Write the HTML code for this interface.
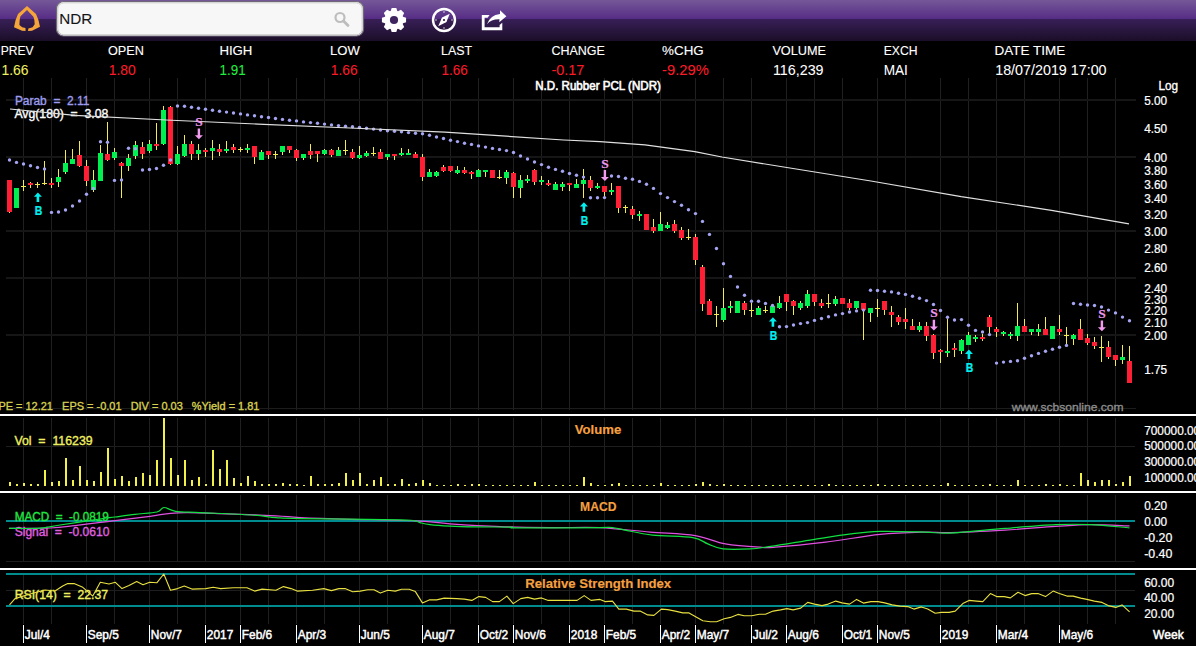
<!DOCTYPE html>
<html><head><meta charset="utf-8">
<style>
html,body{margin:0;padding:0;background:#000;width:1196px;height:646px;overflow:hidden;position:relative}
svg text{font-family:"Liberation Sans",sans-serif}
</style></head><body>
<svg width="1196" height="41" style="position:absolute;left:0;top:0">
 <defs>
  <linearGradient id="hg1" x1="0" y1="0" x2="0" y2="1"><stop offset="0" stop-color="#755898"/><stop offset="1" stop-color="#562c85"/></linearGradient>
  <linearGradient id="hg2" x1="0" y1="0" x2="0" y2="1"><stop offset="0" stop-color="#381f57"/><stop offset="1" stop-color="#1b0e28"/></linearGradient>
 </defs>
 <rect x="0" y="0" width="1196" height="19" fill="url(#hg1)"/>
 <rect x="0" y="19" width="1196" height="22" fill="url(#hg2)"/>
 <path d="M28 31 L32 30.8 L40 26.8 Q39 20 36 14 L27 6 L18 14 Q15 20 14 27.2 L22 30.8 L25.5 31 L25.5 28 L22.2 27.2 L19.4 25 Q19.5 19 20.5 16.3 L27 10 L33.4 16.7 Q34.8 20 34.7 24.2 L32.6 27.2 L28.4 28.4 Z" fill="#f5a63a"/>
 <rect x="56.5" y="1.5" width="307" height="34.5" rx="7" fill="#f7f7f7" stroke="#6e6878" stroke-width="1.2"/>
 <rect x="57.8" y="2.8" width="304.4" height="32" rx="6" fill="none" stroke="#c8c8c8" stroke-width="1"/>
 <circle cx="340" cy="17.5" r="4.5" fill="none" stroke="#bdbdbd" stroke-width="2.2"/>
 <line x1="343.5" y1="21" x2="348" y2="25.5" stroke="#bdbdbd" stroke-width="2.8" stroke-linecap="round"/>
 <g transform="translate(394,20)" fill="#fff"><path d="M-3.32 -9.01 L-2.30 -12.08 L2.30 -12.08 L3.32 -9.01 L4.02 -8.72 L6.91 -10.17 L10.17 -6.91 L8.72 -4.02 L9.01 -3.32 L12.08 -2.30 L12.08 2.30 L9.01 3.32 L8.72 4.02 L10.17 6.91 L6.91 10.17 L4.02 8.72 L3.32 9.01 L2.30 12.08 L-2.30 12.08 L-3.32 9.01 L-4.02 8.72 L-6.91 10.17 L-10.17 6.91 L-8.72 4.02 L-9.01 3.32 L-12.08 2.30 L-12.08 -2.30 L-9.01 -3.32 L-8.72 -4.02 L-10.17 -6.91 L-6.91 -10.17 L-4.02 -8.72 Z"/><circle r="4.1" fill="#3e2560"/></g>
 <g transform="translate(444,20)">
  <circle r="11" fill="none" stroke="#fff" stroke-width="2.4"/>
  <path d="M5.8 -6.2 L2.4 2 L-5.8 6.2 L-2 -2.4 Z" fill="#fff"/>
  <circle r="2.6" fill="#fff"/><circle r="1.1" fill="#2a1840"/>
  <circle cx="0" cy="-8" r="0.7" fill="#fff"/><circle cx="0" cy="8" r="0.7" fill="#fff"/>
  <circle cx="-8" cy="0" r="0.7" fill="#fff"/><circle cx="8" cy="0" r="0.7" fill="#fff"/>
 </g>
 <path d="M481.8 15 L489.6 15 L487.6 17.8 L484.6 17.8 L484.6 27.3 L499.6 27.3 L499.6 25 L502.3 22.7 L502.3 30.2 L481.8 30.2 Z" fill="#fff"/>
 <path d="M487 24.2 Q490 15.2 500 14 L500 10.2 L506.4 16.2 L499.3 22.2 L499.5 19.2 Q491 19 487 24.2 Z" fill="#fff"/>
</svg>
<svg width="1196" height="646" style="position:absolute;left:0;top:0">
<rect x="23.0" y="78" width="1" height="332" fill="#202020"/>
<rect x="51.0" y="78" width="1" height="332" fill="#202020"/>
<rect x="86.0" y="78" width="1" height="332" fill="#202020"/>
<rect x="114.0" y="78" width="1" height="332" fill="#202020"/>
<rect x="149.0" y="78" width="1" height="332" fill="#202020"/>
<rect x="177.0" y="78" width="1" height="332" fill="#202020"/>
<rect x="205.0" y="78" width="1" height="332" fill="#202020"/>
<rect x="240.0" y="78" width="1" height="332" fill="#202020"/>
<rect x="268.0" y="78" width="1" height="332" fill="#202020"/>
<rect x="296.0" y="78" width="1" height="332" fill="#202020"/>
<rect x="324.0" y="78" width="1" height="332" fill="#202020"/>
<rect x="359.0" y="78" width="1" height="332" fill="#202020"/>
<rect x="387.0" y="78" width="1" height="332" fill="#202020"/>
<rect x="422.0" y="78" width="1" height="332" fill="#202020"/>
<rect x="450.0" y="78" width="1" height="332" fill="#202020"/>
<rect x="478.0" y="78" width="1" height="332" fill="#202020"/>
<rect x="513.0" y="78" width="1" height="332" fill="#202020"/>
<rect x="541.0" y="78" width="1" height="332" fill="#202020"/>
<rect x="569.0" y="78" width="1" height="332" fill="#202020"/>
<rect x="604.0" y="78" width="1" height="332" fill="#202020"/>
<rect x="632.0" y="78" width="1" height="332" fill="#202020"/>
<rect x="660.0" y="78" width="1" height="332" fill="#202020"/>
<rect x="695.0" y="78" width="1" height="332" fill="#202020"/>
<rect x="723.0" y="78" width="1" height="332" fill="#202020"/>
<rect x="751.0" y="78" width="1" height="332" fill="#202020"/>
<rect x="786.0" y="78" width="1" height="332" fill="#202020"/>
<rect x="814.0" y="78" width="1" height="332" fill="#202020"/>
<rect x="842.0" y="78" width="1" height="332" fill="#202020"/>
<rect x="877.0" y="78" width="1" height="332" fill="#202020"/>
<rect x="905.0" y="78" width="1" height="332" fill="#202020"/>
<rect x="940.0" y="78" width="1" height="332" fill="#202020"/>
<rect x="968.0" y="78" width="1" height="332" fill="#202020"/>
<rect x="996.0" y="78" width="1" height="332" fill="#202020"/>
<rect x="1024.0" y="78" width="1" height="332" fill="#202020"/>
<rect x="1059.0" y="78" width="1" height="332" fill="#202020"/>
<rect x="1087.0" y="78" width="1" height="332" fill="#202020"/>
<rect x="1115.0" y="78" width="1" height="332" fill="#202020"/>
<rect x="6" y="408" width="1130" height="1" fill="#1c1c1c"/>
<rect x="6" y="99" width="1130" height="2" fill="#161616"/>
<rect x="6" y="156" width="1130" height="2" fill="#161616"/>
<rect x="6" y="230" width="1130" height="2" fill="#161616"/>
<rect x="6" y="277" width="1130" height="2" fill="#161616"/>
<rect x="6" y="334" width="1130" height="2" fill="#161616"/>
<rect x="23.0" y="418" width="1" height="65" fill="#202020"/>
<rect x="51.0" y="418" width="1" height="65" fill="#202020"/>
<rect x="86.0" y="418" width="1" height="65" fill="#202020"/>
<rect x="114.0" y="418" width="1" height="65" fill="#202020"/>
<rect x="149.0" y="418" width="1" height="65" fill="#202020"/>
<rect x="177.0" y="418" width="1" height="65" fill="#202020"/>
<rect x="205.0" y="418" width="1" height="65" fill="#202020"/>
<rect x="240.0" y="418" width="1" height="65" fill="#202020"/>
<rect x="268.0" y="418" width="1" height="65" fill="#202020"/>
<rect x="296.0" y="418" width="1" height="65" fill="#202020"/>
<rect x="324.0" y="418" width="1" height="65" fill="#202020"/>
<rect x="359.0" y="418" width="1" height="65" fill="#202020"/>
<rect x="387.0" y="418" width="1" height="65" fill="#202020"/>
<rect x="422.0" y="418" width="1" height="65" fill="#202020"/>
<rect x="450.0" y="418" width="1" height="65" fill="#202020"/>
<rect x="478.0" y="418" width="1" height="65" fill="#202020"/>
<rect x="513.0" y="418" width="1" height="65" fill="#202020"/>
<rect x="541.0" y="418" width="1" height="65" fill="#202020"/>
<rect x="569.0" y="418" width="1" height="65" fill="#202020"/>
<rect x="604.0" y="418" width="1" height="65" fill="#202020"/>
<rect x="632.0" y="418" width="1" height="65" fill="#202020"/>
<rect x="660.0" y="418" width="1" height="65" fill="#202020"/>
<rect x="695.0" y="418" width="1" height="65" fill="#202020"/>
<rect x="723.0" y="418" width="1" height="65" fill="#202020"/>
<rect x="751.0" y="418" width="1" height="65" fill="#202020"/>
<rect x="786.0" y="418" width="1" height="65" fill="#202020"/>
<rect x="814.0" y="418" width="1" height="65" fill="#202020"/>
<rect x="842.0" y="418" width="1" height="65" fill="#202020"/>
<rect x="877.0" y="418" width="1" height="65" fill="#202020"/>
<rect x="905.0" y="418" width="1" height="65" fill="#202020"/>
<rect x="940.0" y="418" width="1" height="65" fill="#202020"/>
<rect x="968.0" y="418" width="1" height="65" fill="#202020"/>
<rect x="996.0" y="418" width="1" height="65" fill="#202020"/>
<rect x="1024.0" y="418" width="1" height="65" fill="#202020"/>
<rect x="1059.0" y="418" width="1" height="65" fill="#202020"/>
<rect x="1087.0" y="418" width="1" height="65" fill="#202020"/>
<rect x="1115.0" y="418" width="1" height="65" fill="#202020"/>
<rect x="6" y="446" width="1129" height="1" fill="#1e1e1e"/>
<rect x="23.0" y="495" width="1" height="67" fill="#202020"/>
<rect x="51.0" y="495" width="1" height="67" fill="#202020"/>
<rect x="86.0" y="495" width="1" height="67" fill="#202020"/>
<rect x="114.0" y="495" width="1" height="67" fill="#202020"/>
<rect x="149.0" y="495" width="1" height="67" fill="#202020"/>
<rect x="177.0" y="495" width="1" height="67" fill="#202020"/>
<rect x="205.0" y="495" width="1" height="67" fill="#202020"/>
<rect x="240.0" y="495" width="1" height="67" fill="#202020"/>
<rect x="268.0" y="495" width="1" height="67" fill="#202020"/>
<rect x="296.0" y="495" width="1" height="67" fill="#202020"/>
<rect x="324.0" y="495" width="1" height="67" fill="#202020"/>
<rect x="359.0" y="495" width="1" height="67" fill="#202020"/>
<rect x="387.0" y="495" width="1" height="67" fill="#202020"/>
<rect x="422.0" y="495" width="1" height="67" fill="#202020"/>
<rect x="450.0" y="495" width="1" height="67" fill="#202020"/>
<rect x="478.0" y="495" width="1" height="67" fill="#202020"/>
<rect x="513.0" y="495" width="1" height="67" fill="#202020"/>
<rect x="541.0" y="495" width="1" height="67" fill="#202020"/>
<rect x="569.0" y="495" width="1" height="67" fill="#202020"/>
<rect x="604.0" y="495" width="1" height="67" fill="#202020"/>
<rect x="632.0" y="495" width="1" height="67" fill="#202020"/>
<rect x="660.0" y="495" width="1" height="67" fill="#202020"/>
<rect x="695.0" y="495" width="1" height="67" fill="#202020"/>
<rect x="723.0" y="495" width="1" height="67" fill="#202020"/>
<rect x="751.0" y="495" width="1" height="67" fill="#202020"/>
<rect x="786.0" y="495" width="1" height="67" fill="#202020"/>
<rect x="814.0" y="495" width="1" height="67" fill="#202020"/>
<rect x="842.0" y="495" width="1" height="67" fill="#202020"/>
<rect x="877.0" y="495" width="1" height="67" fill="#202020"/>
<rect x="905.0" y="495" width="1" height="67" fill="#202020"/>
<rect x="940.0" y="495" width="1" height="67" fill="#202020"/>
<rect x="968.0" y="495" width="1" height="67" fill="#202020"/>
<rect x="996.0" y="495" width="1" height="67" fill="#202020"/>
<rect x="1024.0" y="495" width="1" height="67" fill="#202020"/>
<rect x="1059.0" y="495" width="1" height="67" fill="#202020"/>
<rect x="1087.0" y="495" width="1" height="67" fill="#202020"/>
<rect x="1115.0" y="495" width="1" height="67" fill="#202020"/>
<rect x="6" y="561" width="1129" height="1" fill="#1e1e1e"/>
<rect x="23.0" y="573" width="1" height="51" fill="#202020"/>
<rect x="51.0" y="573" width="1" height="51" fill="#202020"/>
<rect x="86.0" y="573" width="1" height="51" fill="#202020"/>
<rect x="114.0" y="573" width="1" height="51" fill="#202020"/>
<rect x="149.0" y="573" width="1" height="51" fill="#202020"/>
<rect x="177.0" y="573" width="1" height="51" fill="#202020"/>
<rect x="205.0" y="573" width="1" height="51" fill="#202020"/>
<rect x="240.0" y="573" width="1" height="51" fill="#202020"/>
<rect x="268.0" y="573" width="1" height="51" fill="#202020"/>
<rect x="296.0" y="573" width="1" height="51" fill="#202020"/>
<rect x="324.0" y="573" width="1" height="51" fill="#202020"/>
<rect x="359.0" y="573" width="1" height="51" fill="#202020"/>
<rect x="387.0" y="573" width="1" height="51" fill="#202020"/>
<rect x="422.0" y="573" width="1" height="51" fill="#202020"/>
<rect x="450.0" y="573" width="1" height="51" fill="#202020"/>
<rect x="478.0" y="573" width="1" height="51" fill="#202020"/>
<rect x="513.0" y="573" width="1" height="51" fill="#202020"/>
<rect x="541.0" y="573" width="1" height="51" fill="#202020"/>
<rect x="569.0" y="573" width="1" height="51" fill="#202020"/>
<rect x="604.0" y="573" width="1" height="51" fill="#202020"/>
<rect x="632.0" y="573" width="1" height="51" fill="#202020"/>
<rect x="660.0" y="573" width="1" height="51" fill="#202020"/>
<rect x="695.0" y="573" width="1" height="51" fill="#202020"/>
<rect x="723.0" y="573" width="1" height="51" fill="#202020"/>
<rect x="751.0" y="573" width="1" height="51" fill="#202020"/>
<rect x="786.0" y="573" width="1" height="51" fill="#202020"/>
<rect x="814.0" y="573" width="1" height="51" fill="#202020"/>
<rect x="842.0" y="573" width="1" height="51" fill="#202020"/>
<rect x="877.0" y="573" width="1" height="51" fill="#202020"/>
<rect x="905.0" y="573" width="1" height="51" fill="#202020"/>
<rect x="940.0" y="573" width="1" height="51" fill="#202020"/>
<rect x="968.0" y="573" width="1" height="51" fill="#202020"/>
<rect x="996.0" y="573" width="1" height="51" fill="#202020"/>
<rect x="1024.0" y="573" width="1" height="51" fill="#202020"/>
<rect x="1059.0" y="573" width="1" height="51" fill="#202020"/>
<rect x="1087.0" y="573" width="1" height="51" fill="#202020"/>
<rect x="1115.0" y="573" width="1" height="51" fill="#202020"/>
<rect x="6" y="590" width="1129" height="1" fill="#1e1e1e"/>
<rect x="0" y="414" width="1196" height="2" fill="#fff"/>
<rect x="0" y="491" width="1196" height="2" fill="#fff"/>
<rect x="0" y="568" width="1196" height="2" fill="#fff"/>
<rect x="6" y="520" width="1129" height="2" fill="#008c8e"/>
<rect x="6" y="573" width="1129" height="2" fill="#008c8e"/>
<rect x="6" y="605" width="1129" height="2" fill="#008c8e"/>
<text x="0.7" y="55" font-size="13" fill="#fff" stroke="#fff" stroke-width="0.12" font-weight="normal" textLength="32.9" lengthAdjust="spacingAndGlyphs">PREV</text>
<text x="108.0" y="55" font-size="13" fill="#fff" stroke="#fff" stroke-width="0.12" font-weight="normal" textLength="35.9" lengthAdjust="spacingAndGlyphs">OPEN</text>
<text x="219.4" y="55" font-size="13" fill="#fff" stroke="#fff" stroke-width="0.12" font-weight="normal" textLength="33.0" lengthAdjust="spacingAndGlyphs">HIGH</text>
<text x="330.0" y="55" font-size="13" fill="#fff" stroke="#fff" stroke-width="0.12" font-weight="normal" textLength="29.8" lengthAdjust="spacingAndGlyphs">LOW</text>
<text x="441.1" y="55" font-size="13" fill="#fff" stroke="#fff" stroke-width="0.12" font-weight="normal" textLength="31.1" lengthAdjust="spacingAndGlyphs">LAST</text>
<text x="551.4" y="55" font-size="13" fill="#fff" stroke="#fff" stroke-width="0.12" font-weight="normal" textLength="53.5" lengthAdjust="spacingAndGlyphs">CHANGE</text>
<text x="662.1" y="55" font-size="13" fill="#fff" stroke="#fff" stroke-width="0.12" font-weight="normal" textLength="41.6" lengthAdjust="spacingAndGlyphs">%CHG</text>
<text x="772.4" y="55" font-size="13" fill="#fff" stroke="#fff" stroke-width="0.12" font-weight="normal" textLength="53.7" lengthAdjust="spacingAndGlyphs">VOLUME</text>
<text x="883.7" y="55" font-size="13" fill="#fff" stroke="#fff" stroke-width="0.12" font-weight="normal" textLength="33.8" lengthAdjust="spacingAndGlyphs">EXCH</text>
<text x="994.6" y="55" font-size="13" fill="#fff" stroke="#fff" stroke-width="0.12" font-weight="normal" textLength="70.7" lengthAdjust="spacingAndGlyphs">DATE TIME</text>
<text x="1.4" y="74.8" font-size="13.9" fill="#f0f060" stroke="#f0f060" stroke-width="0.05" font-weight="normal" textLength="27.1" lengthAdjust="spacingAndGlyphs">1.66</text>
<text x="108.8" y="74.8" font-size="13.9" fill="#ff1a2a" stroke="#ff1a2a" stroke-width="0.05" font-weight="normal" textLength="27.0" lengthAdjust="spacingAndGlyphs">1.80</text>
<text x="219.6" y="74.8" font-size="13.9" fill="#20f040" stroke="#20f040" stroke-width="0.05" font-weight="normal" textLength="26.1" lengthAdjust="spacingAndGlyphs">1.91</text>
<text x="330.8" y="74.8" font-size="13.9" fill="#ff1a2a" stroke="#ff1a2a" stroke-width="0.05" font-weight="normal" textLength="26.8" lengthAdjust="spacingAndGlyphs">1.66</text>
<text x="441.6" y="74.8" font-size="13.9" fill="#ff1a2a" stroke="#ff1a2a" stroke-width="0.05" font-weight="normal" textLength="26.3" lengthAdjust="spacingAndGlyphs">1.66</text>
<text x="551.4" y="74.8" font-size="13.9" fill="#ff1a2a" stroke="#ff1a2a" stroke-width="0.05" font-weight="normal" textLength="33.0" lengthAdjust="spacingAndGlyphs">-0.17</text>
<text x="662.1" y="74.8" font-size="13.9" fill="#ff1a2a" stroke="#ff1a2a" stroke-width="0.05" font-weight="normal" textLength="46.7" lengthAdjust="spacingAndGlyphs">-9.29%</text>
<text x="772.9" y="74.8" font-size="13.9" fill="#fff" stroke="#fff" stroke-width="0.05" font-weight="normal" textLength="50.7" lengthAdjust="spacingAndGlyphs">116,239</text>
<text x="883.7" y="74.8" font-size="13.9" fill="#fff" stroke="#fff" stroke-width="0.05" font-weight="normal" textLength="24.2" lengthAdjust="spacingAndGlyphs">MAI</text>
<text x="995.2" y="74.8" font-size="13.9" fill="#fff" stroke="#fff" stroke-width="0.05" font-weight="normal" textLength="111.4" lengthAdjust="spacingAndGlyphs">18/07/2019 17:00</text>
<text x="59.2" y="23.8" font-size="15.5" fill="#151515" stroke="#151515" stroke-width="0.1" font-weight="normal" textLength="33.0" lengthAdjust="spacingAndGlyphs">NDR</text>
<text x="535.2" y="89.8" font-size="12" fill="#fff" stroke="#fff" stroke-width="0.6" font-weight="normal" textLength="125.7" lengthAdjust="spacingAndGlyphs">N.D. Rubber PCL (NDR)</text>
<text x="14.9" y="104.5" font-size="12" fill="#9c9cf0" stroke="#9c9cf0" stroke-width="0.35" font-weight="normal" textLength="74.5" lengthAdjust="spacingAndGlyphs">Parab&#160;&#160;=&#160;&#160;2.11</text>
<text x="14.4" y="118" font-size="12" fill="#fff" stroke="#fff" stroke-width="0.35" font-weight="normal" textLength="94.0" lengthAdjust="spacingAndGlyphs">Avg(180)&#160;&#160;=&#160;&#160;3.08</text>
<text x="-1.6" y="409.6" font-size="11" fill="#d8d050" stroke="#d8d050" stroke-width="0.35" font-weight="normal" textLength="261.0" lengthAdjust="spacingAndGlyphs">PE = 12.21&#160;&#160;&#160;EPS = -0.01&#160;&#160;&#160;DIV = 0.03&#160;&#160;&#160;%Yield = 1.81</text>
<text x="1011.7" y="410.8" font-size="11.5" fill="#8c8c8c" stroke="#8c8c8c" stroke-width="0.35" font-weight="normal" textLength="111.9" lengthAdjust="spacingAndGlyphs">www.scbsonline.com</text>
<text x="574.8" y="434" font-size="12.5" fill="#f5a040" stroke="#f5a040" stroke-width="0.15" font-weight="bold" textLength="46.5" lengthAdjust="spacingAndGlyphs">Volume</text>
<text x="580.1" y="510.9" font-size="12.5" fill="#f5a040" stroke="#f5a040" stroke-width="0.15" font-weight="bold" textLength="36.3" lengthAdjust="spacingAndGlyphs">MACD</text>
<text x="525.2" y="587.8" font-size="12.5" fill="#f5a040" stroke="#f5a040" stroke-width="0.15" font-weight="bold" textLength="146.0" lengthAdjust="spacingAndGlyphs">Relative Strength Index</text>
<text x="14.4" y="444.8" font-size="12" fill="#f0f060" stroke="#f0f060" stroke-width="0.35" font-weight="normal" textLength="78.2" lengthAdjust="spacingAndGlyphs">Vol&#160;&#160;=&#160;&#160;116239</text>
<text x="14.7" y="521.3" font-size="12" fill="#20e840" stroke="#20e840" stroke-width="0.35" font-weight="normal" textLength="94.2" lengthAdjust="spacingAndGlyphs">MACD&#160;&#160;=&#160;&#160;-0.0819</text>
<text x="14.7" y="535.5" font-size="12" fill="#e060e0" stroke="#e060e0" stroke-width="0.35" font-weight="normal" textLength="94.7" lengthAdjust="spacingAndGlyphs">Signal&#160;&#160;=&#160;&#160;-0.0610</text>
<text x="14.7" y="598.8" font-size="12" fill="#f0f060" stroke="#f0f060" stroke-width="0.35" font-weight="normal" textLength="93.4" lengthAdjust="spacingAndGlyphs">RSI(14)&#160;&#160;=&#160;&#160;22.37</text>
<text x="1144.2" y="105.0" font-size="12.5" fill="#fff" stroke="#fff" stroke-width="0.22" textLength="23.0" lengthAdjust="spacingAndGlyphs">5.00</text>
<text x="1144.2" y="132.6" font-size="12.5" fill="#fff" stroke="#fff" stroke-width="0.22" textLength="23.0" lengthAdjust="spacingAndGlyphs">4.50</text>
<text x="1144.2" y="162.3" font-size="12.5" fill="#fff" stroke="#fff" stroke-width="0.22" textLength="23.0" lengthAdjust="spacingAndGlyphs">4.00</text>
<text x="1144.2" y="175.3" font-size="12.5" fill="#fff" stroke="#fff" stroke-width="0.22" textLength="23.0" lengthAdjust="spacingAndGlyphs">3.80</text>
<text x="1144.2" y="188.9" font-size="12.5" fill="#fff" stroke="#fff" stroke-width="0.22" textLength="23.0" lengthAdjust="spacingAndGlyphs">3.60</text>
<text x="1144.2" y="203.0" font-size="12.5" fill="#fff" stroke="#fff" stroke-width="0.22" textLength="23.0" lengthAdjust="spacingAndGlyphs">3.40</text>
<text x="1144.2" y="219.4" font-size="12.5" fill="#fff" stroke="#fff" stroke-width="0.22" textLength="23.0" lengthAdjust="spacingAndGlyphs">3.20</text>
<text x="1144.2" y="236.1" font-size="12.5" fill="#fff" stroke="#fff" stroke-width="0.22" textLength="23.0" lengthAdjust="spacingAndGlyphs">3.00</text>
<text x="1144.2" y="253.0" font-size="12.5" fill="#fff" stroke="#fff" stroke-width="0.22" textLength="23.0" lengthAdjust="spacingAndGlyphs">2.80</text>
<text x="1144.2" y="271.6" font-size="12.5" fill="#fff" stroke="#fff" stroke-width="0.22" textLength="23.0" lengthAdjust="spacingAndGlyphs">2.60</text>
<text x="1144.2" y="292.7" font-size="12.5" fill="#fff" stroke="#fff" stroke-width="0.22" textLength="23.0" lengthAdjust="spacingAndGlyphs">2.40</text>
<text x="1144.2" y="303.8" font-size="12.5" fill="#fff" stroke="#fff" stroke-width="0.22" textLength="23.0" lengthAdjust="spacingAndGlyphs">2.30</text>
<text x="1144.2" y="315.2" font-size="12.5" fill="#fff" stroke="#fff" stroke-width="0.22" textLength="23.0" lengthAdjust="spacingAndGlyphs">2.20</text>
<text x="1144.2" y="326.6" font-size="12.5" fill="#fff" stroke="#fff" stroke-width="0.22" textLength="23.0" lengthAdjust="spacingAndGlyphs">2.10</text>
<text x="1144.2" y="339.8" font-size="12.5" fill="#fff" stroke="#fff" stroke-width="0.22" textLength="23.0" lengthAdjust="spacingAndGlyphs">2.00</text>
<text x="1144.2" y="374.1" font-size="12.5" fill="#fff" stroke="#fff" stroke-width="0.22" textLength="23.0" lengthAdjust="spacingAndGlyphs">1.75</text>
<text x="1158.4" y="90" font-size="12.5" fill="#fff" stroke="#fff" stroke-width="0.35" font-weight="normal" textLength="19.6" lengthAdjust="spacingAndGlyphs">Log</text>
<text x="1144.2" y="435.1" font-size="12.5" fill="#fff" stroke="#fff" stroke-width="0.22" textLength="56.0" lengthAdjust="spacingAndGlyphs">700000.00</text>
<text x="1144.2" y="450.4" font-size="12.5" fill="#fff" stroke="#fff" stroke-width="0.22" textLength="56.0" lengthAdjust="spacingAndGlyphs">500000.00</text>
<text x="1144.2" y="465.9" font-size="12.5" fill="#fff" stroke="#fff" stroke-width="0.22" textLength="56.0" lengthAdjust="spacingAndGlyphs">300000.00</text>
<text x="1144.2" y="482.1" font-size="12.5" fill="#fff" stroke="#fff" stroke-width="0.22" textLength="56.0" lengthAdjust="spacingAndGlyphs">100000.00</text>
<text x="1144.2" y="510.3" font-size="12.5" fill="#fff" stroke="#fff" stroke-width="0.22" textLength="23.0" lengthAdjust="spacingAndGlyphs">0.20</text>
<text x="1144.2" y="525.6" font-size="12.5" fill="#fff" stroke="#fff" stroke-width="0.22" textLength="23.0" lengthAdjust="spacingAndGlyphs">0.00</text>
<text x="1144.2" y="541.6" font-size="12.5" fill="#fff" stroke="#fff" stroke-width="0.22" textLength="28.2" lengthAdjust="spacingAndGlyphs">-0.20</text>
<text x="1144.2" y="557.8" font-size="12.5" fill="#fff" stroke="#fff" stroke-width="0.22" textLength="28.2" lengthAdjust="spacingAndGlyphs">-0.40</text>
<text x="1144.2" y="586.6" font-size="12.5" fill="#fff" stroke="#fff" stroke-width="0.22" textLength="30.0" lengthAdjust="spacingAndGlyphs">60.00</text>
<text x="1144.2" y="602.0" font-size="12.5" fill="#fff" stroke="#fff" stroke-width="0.22" textLength="30.0" lengthAdjust="spacingAndGlyphs">40.00</text>
<text x="1144.2" y="617.8" font-size="12.5" fill="#fff" stroke="#fff" stroke-width="0.22" textLength="30.0" lengthAdjust="spacingAndGlyphs">20.00</text>
<rect x="23.0" y="625" width="1" height="18" fill="#fff"/>
<text x="24.8" y="639.3" font-size="11.9" fill="#fff" stroke="#fff" stroke-width="0.45">Jul/4</text>
<rect x="86.0" y="625" width="1" height="18" fill="#fff"/>
<text x="87.8" y="639.3" font-size="11.9" fill="#fff" stroke="#fff" stroke-width="0.45">Sep/5</text>
<rect x="149.0" y="625" width="1" height="18" fill="#fff"/>
<text x="150.8" y="639.3" font-size="11.9" fill="#fff" stroke="#fff" stroke-width="0.45">Nov/7</text>
<rect x="205.0" y="625" width="1" height="18" fill="#fff"/>
<text x="206.8" y="639.3" font-size="11.9" fill="#fff" stroke="#fff" stroke-width="0.45">2017</text>
<rect x="240.0" y="625" width="1" height="18" fill="#fff"/>
<text x="241.8" y="639.3" font-size="11.9" fill="#fff" stroke="#fff" stroke-width="0.45">Feb/6</text>
<rect x="296.0" y="625" width="1" height="18" fill="#fff"/>
<text x="297.8" y="639.3" font-size="11.9" fill="#fff" stroke="#fff" stroke-width="0.45">Apr/3</text>
<rect x="359.0" y="625" width="1" height="18" fill="#fff"/>
<text x="360.8" y="639.3" font-size="11.9" fill="#fff" stroke="#fff" stroke-width="0.45">Jun/5</text>
<rect x="422.0" y="625" width="1" height="18" fill="#fff"/>
<text x="423.8" y="639.3" font-size="11.9" fill="#fff" stroke="#fff" stroke-width="0.45">Aug/7</text>
<rect x="478.0" y="625" width="1" height="18" fill="#fff"/>
<text x="479.8" y="639.3" font-size="11.9" fill="#fff" stroke="#fff" stroke-width="0.45">Oct/2</text>
<rect x="513.0" y="625" width="1" height="18" fill="#fff"/>
<text x="514.8" y="639.3" font-size="11.9" fill="#fff" stroke="#fff" stroke-width="0.45">Nov/6</text>
<rect x="569.0" y="625" width="1" height="18" fill="#fff"/>
<text x="570.8" y="639.3" font-size="11.9" fill="#fff" stroke="#fff" stroke-width="0.45">2018</text>
<rect x="604.0" y="625" width="1" height="18" fill="#fff"/>
<text x="605.8" y="639.3" font-size="11.9" fill="#fff" stroke="#fff" stroke-width="0.45">Feb/5</text>
<rect x="660.0" y="625" width="1" height="18" fill="#fff"/>
<text x="661.8" y="639.3" font-size="11.9" fill="#fff" stroke="#fff" stroke-width="0.45">Apr/2</text>
<rect x="695.0" y="625" width="1" height="18" fill="#fff"/>
<text x="696.8" y="639.3" font-size="11.9" fill="#fff" stroke="#fff" stroke-width="0.45">May/7</text>
<rect x="751.0" y="625" width="1" height="18" fill="#fff"/>
<text x="752.8" y="639.3" font-size="11.9" fill="#fff" stroke="#fff" stroke-width="0.45">Jul/2</text>
<rect x="786.0" y="625" width="1" height="18" fill="#fff"/>
<text x="787.8" y="639.3" font-size="11.9" fill="#fff" stroke="#fff" stroke-width="0.45">Aug/6</text>
<rect x="842.0" y="625" width="1" height="18" fill="#fff"/>
<text x="843.8" y="639.3" font-size="11.9" fill="#fff" stroke="#fff" stroke-width="0.45">Oct/1</text>
<rect x="877.0" y="625" width="1" height="18" fill="#fff"/>
<text x="878.8" y="639.3" font-size="11.9" fill="#fff" stroke="#fff" stroke-width="0.45">Nov/5</text>
<rect x="940.0" y="625" width="1" height="18" fill="#fff"/>
<text x="941.8" y="639.3" font-size="11.9" fill="#fff" stroke="#fff" stroke-width="0.45">2019</text>
<rect x="996.0" y="625" width="1" height="18" fill="#fff"/>
<text x="997.8" y="639.3" font-size="11.9" fill="#fff" stroke="#fff" stroke-width="0.45">Mar/4</text>
<rect x="1059.0" y="625" width="1" height="18" fill="#fff"/>
<text x="1060.8" y="639.3" font-size="11.9" fill="#fff" stroke="#fff" stroke-width="0.45">May/6</text>
<text x="1153.1" y="639.3" font-size="12" fill="#fff" stroke="#fff" stroke-width="0.45" font-weight="normal" textLength="30.8" lengthAdjust="spacingAndGlyphs">Week</text>
<rect x="9" y="482" width="2" height="4" fill="#f0f048"/>
<rect x="16" y="484" width="2" height="2" fill="#f0f048"/>
<rect x="23" y="483" width="2" height="3" fill="#f0f048"/>
<rect x="30" y="484" width="2" height="2" fill="#f0f048"/>
<rect x="37" y="484" width="2" height="2" fill="#f0f048"/>
<rect x="44" y="470" width="2" height="16" fill="#f0f048"/>
<rect x="51" y="482" width="2" height="4" fill="#f0f048"/>
<rect x="58" y="481" width="2" height="5" fill="#f0f048"/>
<rect x="65" y="458" width="2" height="28" fill="#f0f048"/>
<rect x="72" y="480" width="2" height="6" fill="#f0f048"/>
<rect x="79" y="466" width="2" height="20" fill="#f0f048"/>
<rect x="86" y="480" width="2" height="6" fill="#f0f048"/>
<rect x="93" y="481" width="2" height="5" fill="#f0f048"/>
<rect x="100" y="472" width="2" height="14" fill="#f0f048"/>
<rect x="107" y="448" width="2" height="38" fill="#f0f048"/>
<rect x="114" y="479" width="2" height="7" fill="#f0f048"/>
<rect x="121" y="476" width="2" height="10" fill="#f0f048"/>
<rect x="128" y="481" width="2" height="5" fill="#f0f048"/>
<rect x="135" y="477" width="2" height="9" fill="#f0f048"/>
<rect x="142" y="473" width="2" height="13" fill="#f0f048"/>
<rect x="149" y="475" width="2" height="11" fill="#f0f048"/>
<rect x="156" y="460" width="2" height="26" fill="#f0f048"/>
<rect x="163" y="418" width="2" height="68" fill="#f0f048"/>
<rect x="170" y="458" width="2" height="28" fill="#f0f048"/>
<rect x="177" y="475" width="2" height="11" fill="#f0f048"/>
<rect x="184" y="460" width="2" height="26" fill="#f0f048"/>
<rect x="191" y="480" width="2" height="6" fill="#f0f048"/>
<rect x="198" y="477" width="2" height="9" fill="#f0f048"/>
<rect x="205" y="484" width="2" height="2" fill="#f0f048"/>
<rect x="212" y="450" width="2" height="36" fill="#f0f048"/>
<rect x="219" y="469" width="2" height="17" fill="#f0f048"/>
<rect x="226" y="460" width="2" height="26" fill="#f0f048"/>
<rect x="233" y="478" width="2" height="8" fill="#f0f048"/>
<rect x="240" y="483" width="2" height="3" fill="#f0f048"/>
<rect x="247" y="476" width="2" height="10" fill="#f0f048"/>
<rect x="254" y="481" width="2" height="5" fill="#f0f048"/>
<rect x="261" y="484" width="2" height="2" fill="#f0f048"/>
<rect x="268" y="484" width="2" height="2" fill="#f0f048"/>
<rect x="275" y="484" width="2" height="2" fill="#f0f048"/>
<rect x="282" y="483" width="2" height="3" fill="#f0f048"/>
<rect x="289" y="484" width="2" height="2" fill="#f0f048"/>
<rect x="296" y="484" width="2" height="2" fill="#f0f048"/>
<rect x="303" y="485" width="2" height="1" fill="#f0f048"/>
<rect x="310" y="476" width="2" height="10" fill="#f0f048"/>
<rect x="317" y="484" width="2" height="2" fill="#f0f048"/>
<rect x="324" y="484" width="2" height="2" fill="#f0f048"/>
<rect x="331" y="484" width="2" height="2" fill="#f0f048"/>
<rect x="338" y="483" width="2" height="3" fill="#f0f048"/>
<rect x="345" y="473" width="2" height="13" fill="#f0f048"/>
<rect x="352" y="480" width="2" height="6" fill="#f0f048"/>
<rect x="359" y="473" width="2" height="13" fill="#f0f048"/>
<rect x="366" y="484" width="2" height="2" fill="#f0f048"/>
<rect x="373" y="480" width="2" height="6" fill="#f0f048"/>
<rect x="380" y="477" width="2" height="9" fill="#f0f048"/>
<rect x="387" y="484" width="2" height="2" fill="#f0f048"/>
<rect x="394" y="484" width="2" height="2" fill="#f0f048"/>
<rect x="401" y="479" width="2" height="7" fill="#f0f048"/>
<rect x="408" y="484" width="2" height="2" fill="#f0f048"/>
<rect x="415" y="483" width="2" height="3" fill="#f0f048"/>
<rect x="422" y="480" width="2" height="6" fill="#f0f048"/>
<rect x="429" y="483" width="2" height="3" fill="#f0f048"/>
<rect x="436" y="485" width="2" height="1" fill="#f0f048"/>
<rect x="443" y="485" width="2" height="1" fill="#f0f048"/>
<rect x="450" y="485" width="2" height="1" fill="#f0f048"/>
<rect x="457" y="484" width="2" height="2" fill="#f0f048"/>
<rect x="464" y="485" width="2" height="1" fill="#f0f048"/>
<rect x="471" y="484" width="2" height="2" fill="#f0f048"/>
<rect x="478" y="484" width="2" height="2" fill="#f0f048"/>
<rect x="485" y="485" width="2" height="1" fill="#f0f048"/>
<rect x="492" y="485" width="2" height="1" fill="#f0f048"/>
<rect x="499" y="485" width="2" height="1" fill="#f0f048"/>
<rect x="506" y="485" width="2" height="1" fill="#f0f048"/>
<rect x="513" y="485" width="2" height="1" fill="#f0f048"/>
<rect x="520" y="485" width="2" height="1" fill="#f0f048"/>
<rect x="527" y="485" width="2" height="1" fill="#f0f048"/>
<rect x="534" y="482" width="2" height="4" fill="#f0f048"/>
<rect x="541" y="485" width="2" height="1" fill="#f0f048"/>
<rect x="548" y="485" width="2" height="1" fill="#f0f048"/>
<rect x="555" y="485" width="2" height="1" fill="#f0f048"/>
<rect x="562" y="485" width="2" height="1" fill="#f0f048"/>
<rect x="569" y="485" width="2" height="1" fill="#f0f048"/>
<rect x="576" y="485" width="2" height="1" fill="#f0f048"/>
<rect x="583" y="477" width="2" height="9" fill="#f0f048"/>
<rect x="590" y="483" width="2" height="3" fill="#f0f048"/>
<rect x="597" y="485" width="2" height="1" fill="#f0f048"/>
<rect x="604" y="485" width="2" height="1" fill="#f0f048"/>
<rect x="611" y="484" width="2" height="2" fill="#f0f048"/>
<rect x="618" y="483" width="2" height="3" fill="#f0f048"/>
<rect x="625" y="485" width="2" height="1" fill="#f0f048"/>
<rect x="632" y="485" width="2" height="1" fill="#f0f048"/>
<rect x="639" y="485" width="2" height="1" fill="#f0f048"/>
<rect x="646" y="485" width="2" height="1" fill="#f0f048"/>
<rect x="653" y="485" width="2" height="1" fill="#f0f048"/>
<rect x="660" y="483" width="2" height="3" fill="#f0f048"/>
<rect x="667" y="485" width="2" height="1" fill="#f0f048"/>
<rect x="674" y="485" width="2" height="1" fill="#f0f048"/>
<rect x="681" y="485" width="2" height="1" fill="#f0f048"/>
<rect x="688" y="485" width="2" height="1" fill="#f0f048"/>
<rect x="695" y="484" width="2" height="2" fill="#f0f048"/>
<rect x="702" y="482" width="2" height="4" fill="#f0f048"/>
<rect x="709" y="484" width="2" height="2" fill="#f0f048"/>
<rect x="716" y="485" width="2" height="1" fill="#f0f048"/>
<rect x="723" y="484" width="2" height="2" fill="#f0f048"/>
<rect x="730" y="485" width="2" height="1" fill="#f0f048"/>
<rect x="737" y="485" width="2" height="1" fill="#f0f048"/>
<rect x="744" y="485" width="2" height="1" fill="#f0f048"/>
<rect x="751" y="485" width="2" height="1" fill="#f0f048"/>
<rect x="758" y="485" width="2" height="1" fill="#f0f048"/>
<rect x="765" y="485" width="2" height="1" fill="#f0f048"/>
<rect x="772" y="485" width="2" height="1" fill="#f0f048"/>
<rect x="779" y="485" width="2" height="1" fill="#f0f048"/>
<rect x="786" y="485" width="2" height="1" fill="#f0f048"/>
<rect x="793" y="485" width="2" height="1" fill="#f0f048"/>
<rect x="800" y="485" width="2" height="1" fill="#f0f048"/>
<rect x="807" y="485" width="2" height="1" fill="#f0f048"/>
<rect x="814" y="485" width="2" height="1" fill="#f0f048"/>
<rect x="821" y="485" width="2" height="1" fill="#f0f048"/>
<rect x="828" y="484" width="2" height="2" fill="#f0f048"/>
<rect x="835" y="485" width="2" height="1" fill="#f0f048"/>
<rect x="842" y="485" width="2" height="1" fill="#f0f048"/>
<rect x="849" y="485" width="2" height="1" fill="#f0f048"/>
<rect x="856" y="485" width="2" height="1" fill="#f0f048"/>
<rect x="863" y="485" width="2" height="1" fill="#f0f048"/>
<rect x="870" y="485" width="2" height="1" fill="#f0f048"/>
<rect x="877" y="484" width="2" height="2" fill="#f0f048"/>
<rect x="884" y="485" width="2" height="1" fill="#f0f048"/>
<rect x="891" y="485" width="2" height="1" fill="#f0f048"/>
<rect x="898" y="485" width="2" height="1" fill="#f0f048"/>
<rect x="905" y="485" width="2" height="1" fill="#f0f048"/>
<rect x="912" y="485" width="2" height="1" fill="#f0f048"/>
<rect x="919" y="485" width="2" height="1" fill="#f0f048"/>
<rect x="926" y="485" width="2" height="1" fill="#f0f048"/>
<rect x="933" y="485" width="2" height="1" fill="#f0f048"/>
<rect x="940" y="485" width="2" height="1" fill="#f0f048"/>
<rect x="947" y="483" width="2" height="3" fill="#f0f048"/>
<rect x="954" y="485" width="2" height="1" fill="#f0f048"/>
<rect x="961" y="485" width="2" height="1" fill="#f0f048"/>
<rect x="968" y="485" width="2" height="1" fill="#f0f048"/>
<rect x="975" y="485" width="2" height="1" fill="#f0f048"/>
<rect x="982" y="485" width="2" height="1" fill="#f0f048"/>
<rect x="989" y="484" width="2" height="2" fill="#f0f048"/>
<rect x="996" y="485" width="2" height="1" fill="#f0f048"/>
<rect x="1003" y="485" width="2" height="1" fill="#f0f048"/>
<rect x="1010" y="485" width="2" height="1" fill="#f0f048"/>
<rect x="1017" y="480" width="2" height="6" fill="#f0f048"/>
<rect x="1024" y="485" width="2" height="1" fill="#f0f048"/>
<rect x="1031" y="485" width="2" height="1" fill="#f0f048"/>
<rect x="1038" y="485" width="2" height="1" fill="#f0f048"/>
<rect x="1045" y="484" width="2" height="2" fill="#f0f048"/>
<rect x="1052" y="485" width="2" height="1" fill="#f0f048"/>
<rect x="1059" y="484" width="2" height="2" fill="#f0f048"/>
<rect x="1066" y="485" width="2" height="1" fill="#f0f048"/>
<rect x="1073" y="485" width="2" height="1" fill="#f0f048"/>
<rect x="1080" y="473" width="2" height="13" fill="#f0f048"/>
<rect x="1087" y="480" width="2" height="6" fill="#f0f048"/>
<rect x="1094" y="482" width="2" height="4" fill="#f0f048"/>
<rect x="1101" y="480" width="2" height="6" fill="#f0f048"/>
<rect x="1108" y="480" width="2" height="6" fill="#f0f048"/>
<rect x="1115" y="484" width="2" height="2" fill="#f0f048"/>
<rect x="1122" y="482" width="2" height="4" fill="#f0f048"/>
<rect x="1129" y="476" width="2" height="10" fill="#f0f048"/>
<rect x="9" y="180" width="1" height="33" fill="#f2ec50"/>
<rect x="7" y="180" width="5" height="32" fill="#ff1f35"/>
<rect x="16" y="188" width="1" height="20" fill="#f2ec50"/>
<rect x="14" y="188" width="5" height="20" fill="#00f050"/>
<rect x="23" y="180" width="1" height="11" fill="#f2ec50"/>
<rect x="21" y="186" width="5" height="1" fill="#f2ec50"/>
<rect x="30" y="182" width="1" height="6" fill="#f2ec50"/>
<rect x="28" y="183" width="5" height="2" fill="#ff1f35"/>
<rect x="37" y="182" width="1" height="6" fill="#f2ec50"/>
<rect x="35" y="184" width="5" height="1" fill="#f2ec50"/>
<rect x="44" y="161" width="1" height="24" fill="#f2ec50"/>
<rect x="42" y="183" width="5" height="1" fill="#f2ec50"/>
<rect x="51" y="178" width="1" height="10" fill="#f2ec50"/>
<rect x="49" y="183" width="5" height="2" fill="#ff1f35"/>
<rect x="58" y="169" width="1" height="18" fill="#f2ec50"/>
<rect x="56" y="177" width="5" height="5" fill="#00f050"/>
<rect x="65" y="150" width="1" height="24" fill="#f2ec50"/>
<rect x="63" y="163" width="5" height="9" fill="#00f050"/>
<rect x="72" y="149" width="1" height="15" fill="#f2ec50"/>
<rect x="70" y="159" width="5" height="5" fill="#00f050"/>
<rect x="79" y="141" width="1" height="26" fill="#f2ec50"/>
<rect x="77" y="155" width="5" height="11" fill="#ff1f35"/>
<rect x="86" y="160" width="1" height="26" fill="#f2ec50"/>
<rect x="84" y="166" width="5" height="15" fill="#ff1f35"/>
<rect x="93" y="170" width="1" height="22" fill="#f2ec50"/>
<rect x="91" y="180" width="5" height="10" fill="#00f050"/>
<rect x="100" y="145" width="1" height="36" fill="#f2ec50"/>
<rect x="98" y="153" width="5" height="28" fill="#00f050"/>
<rect x="107" y="122" width="1" height="39" fill="#f2ec50"/>
<rect x="105" y="154" width="5" height="6" fill="#ff1f35"/>
<rect x="114" y="148" width="1" height="12" fill="#f2ec50"/>
<rect x="112" y="152" width="5" height="6" fill="#00f050"/>
<rect x="121" y="162" width="1" height="36" fill="#f2ec50"/>
<rect x="119" y="163" width="5" height="3" fill="#ff1f35"/>
<rect x="128" y="154" width="1" height="17" fill="#f2ec50"/>
<rect x="126" y="158" width="5" height="8" fill="#00f050"/>
<rect x="135" y="141" width="1" height="18" fill="#f2ec50"/>
<rect x="133" y="145" width="5" height="11" fill="#00f050"/>
<rect x="142" y="142" width="1" height="17" fill="#f2ec50"/>
<rect x="140" y="147" width="5" height="7" fill="#ff1f35"/>
<rect x="149" y="140" width="1" height="13" fill="#f2ec50"/>
<rect x="147" y="144" width="5" height="7" fill="#00f050"/>
<rect x="156" y="123" width="1" height="27" fill="#f2ec50"/>
<rect x="154" y="144" width="5" height="2" fill="#ff1f35"/>
<rect x="163" y="106" width="1" height="39" fill="#f2ec50"/>
<rect x="161" y="110" width="5" height="34" fill="#00f050"/>
<rect x="170" y="106" width="1" height="59" fill="#f2ec50"/>
<rect x="168" y="107" width="5" height="57" fill="#ff1f35"/>
<rect x="177" y="146" width="1" height="19" fill="#f2ec50"/>
<rect x="175" y="154" width="5" height="10" fill="#00f050"/>
<rect x="184" y="135" width="1" height="22" fill="#f2ec50"/>
<rect x="182" y="144" width="5" height="12" fill="#00f050"/>
<rect x="191" y="141" width="1" height="19" fill="#f2ec50"/>
<rect x="189" y="144" width="5" height="10" fill="#ff1f35"/>
<rect x="198" y="144" width="1" height="16" fill="#f2ec50"/>
<rect x="196" y="150" width="5" height="4" fill="#00f050"/>
<rect x="205" y="148" width="1" height="9" fill="#f2ec50"/>
<rect x="203" y="150" width="5" height="2" fill="#ff1f35"/>
<rect x="212" y="140" width="1" height="20" fill="#f2ec50"/>
<rect x="210" y="148" width="5" height="3" fill="#00f050"/>
<rect x="219" y="144" width="1" height="12" fill="#f2ec50"/>
<rect x="217" y="149" width="5" height="3" fill="#ff1f35"/>
<rect x="226" y="141" width="1" height="12" fill="#f2ec50"/>
<rect x="224" y="149" width="5" height="2" fill="#00f050"/>
<rect x="233" y="144" width="1" height="9" fill="#f2ec50"/>
<rect x="231" y="147" width="5" height="3" fill="#ff1f35"/>
<rect x="240" y="147" width="1" height="5" fill="#f2ec50"/>
<rect x="238" y="149" width="5" height="1" fill="#f2ec50"/>
<rect x="247" y="144" width="1" height="9" fill="#f2ec50"/>
<rect x="245" y="148" width="5" height="2" fill="#00f050"/>
<rect x="254" y="146" width="1" height="18" fill="#f2ec50"/>
<rect x="252" y="146" width="5" height="11" fill="#ff1f35"/>
<rect x="261" y="150" width="1" height="10" fill="#f2ec50"/>
<rect x="259" y="152" width="5" height="8" fill="#00f050"/>
<rect x="268" y="151" width="1" height="8" fill="#f2ec50"/>
<rect x="266" y="151" width="5" height="4" fill="#ff1f35"/>
<rect x="275" y="151" width="1" height="8" fill="#f2ec50"/>
<rect x="273" y="154" width="5" height="1" fill="#f2ec50"/>
<rect x="282" y="146" width="1" height="9" fill="#f2ec50"/>
<rect x="280" y="146" width="5" height="6" fill="#00f050"/>
<rect x="289" y="146" width="1" height="7" fill="#f2ec50"/>
<rect x="287" y="146" width="5" height="4" fill="#ff1f35"/>
<rect x="296" y="149" width="1" height="12" fill="#f2ec50"/>
<rect x="294" y="150" width="5" height="8" fill="#ff1f35"/>
<rect x="303" y="154" width="1" height="6" fill="#f2ec50"/>
<rect x="301" y="154" width="5" height="4" fill="#00f050"/>
<rect x="310" y="144" width="1" height="15" fill="#f2ec50"/>
<rect x="308" y="151" width="5" height="4" fill="#ff1f35"/>
<rect x="317" y="151" width="1" height="11" fill="#f2ec50"/>
<rect x="315" y="151" width="5" height="3" fill="#ff1f35"/>
<rect x="324" y="149" width="1" height="6" fill="#f2ec50"/>
<rect x="322" y="150" width="5" height="4" fill="#00f050"/>
<rect x="331" y="149" width="1" height="8" fill="#f2ec50"/>
<rect x="329" y="150" width="5" height="5" fill="#ff1f35"/>
<rect x="338" y="147" width="1" height="9" fill="#f2ec50"/>
<rect x="336" y="150" width="5" height="6" fill="#00f050"/>
<rect x="345" y="140" width="1" height="15" fill="#f2ec50"/>
<rect x="343" y="150" width="5" height="1" fill="#f2ec50"/>
<rect x="352" y="149" width="1" height="10" fill="#f2ec50"/>
<rect x="350" y="152" width="5" height="6" fill="#ff1f35"/>
<rect x="359" y="146" width="1" height="13" fill="#f2ec50"/>
<rect x="357" y="155" width="5" height="3" fill="#00f050"/>
<rect x="366" y="151" width="1" height="6" fill="#f2ec50"/>
<rect x="364" y="153" width="5" height="3" fill="#00f050"/>
<rect x="373" y="147" width="1" height="9" fill="#f2ec50"/>
<rect x="371" y="153" width="5" height="1" fill="#f2ec50"/>
<rect x="380" y="149" width="1" height="10" fill="#f2ec50"/>
<rect x="378" y="152" width="5" height="7" fill="#ff1f35"/>
<rect x="387" y="154" width="1" height="6" fill="#f2ec50"/>
<rect x="385" y="154" width="5" height="3" fill="#00f050"/>
<rect x="394" y="154" width="1" height="6" fill="#f2ec50"/>
<rect x="392" y="154" width="5" height="2" fill="#ff1f35"/>
<rect x="401" y="148" width="1" height="8" fill="#f2ec50"/>
<rect x="399" y="153" width="5" height="2" fill="#00f050"/>
<rect x="408" y="149" width="1" height="6" fill="#f2ec50"/>
<rect x="406" y="153" width="5" height="2" fill="#00f050"/>
<rect x="415" y="152" width="1" height="6" fill="#f2ec50"/>
<rect x="413" y="154" width="5" height="4" fill="#ff1f35"/>
<rect x="422" y="154" width="1" height="27" fill="#f2ec50"/>
<rect x="420" y="157" width="5" height="20" fill="#ff1f35"/>
<rect x="429" y="169" width="1" height="8" fill="#f2ec50"/>
<rect x="427" y="172" width="5" height="5" fill="#00f050"/>
<rect x="436" y="171" width="1" height="6" fill="#f2ec50"/>
<rect x="434" y="172" width="5" height="4" fill="#00f050"/>
<rect x="443" y="165" width="1" height="7" fill="#f2ec50"/>
<rect x="441" y="167" width="5" height="4" fill="#ff1f35"/>
<rect x="450" y="166" width="1" height="6" fill="#f2ec50"/>
<rect x="448" y="166" width="5" height="5" fill="#ff1f35"/>
<rect x="457" y="166" width="1" height="8" fill="#f2ec50"/>
<rect x="455" y="170" width="5" height="3" fill="#00f050"/>
<rect x="464" y="167" width="1" height="7" fill="#f2ec50"/>
<rect x="462" y="170" width="5" height="3" fill="#ff1f35"/>
<rect x="471" y="171" width="1" height="8" fill="#f2ec50"/>
<rect x="469" y="172" width="5" height="2" fill="#ff1f35"/>
<rect x="478" y="169" width="1" height="8" fill="#f2ec50"/>
<rect x="476" y="170" width="5" height="7" fill="#00f050"/>
<rect x="485" y="170" width="1" height="7" fill="#f2ec50"/>
<rect x="483" y="170" width="5" height="2" fill="#00f050"/>
<rect x="492" y="170" width="1" height="8" fill="#f2ec50"/>
<rect x="490" y="170" width="5" height="8" fill="#ff1f35"/>
<rect x="499" y="170" width="1" height="9" fill="#f2ec50"/>
<rect x="497" y="177" width="5" height="1" fill="#f2ec50"/>
<rect x="506" y="170" width="1" height="14" fill="#f2ec50"/>
<rect x="504" y="172" width="5" height="6" fill="#00f050"/>
<rect x="513" y="172" width="1" height="26" fill="#f2ec50"/>
<rect x="511" y="173" width="5" height="14" fill="#ff1f35"/>
<rect x="520" y="175" width="1" height="23" fill="#f2ec50"/>
<rect x="518" y="180" width="5" height="8" fill="#00f050"/>
<rect x="527" y="175" width="1" height="8" fill="#f2ec50"/>
<rect x="525" y="179" width="5" height="2" fill="#00f050"/>
<rect x="534" y="169" width="1" height="16" fill="#f2ec50"/>
<rect x="532" y="170" width="5" height="12" fill="#ff1f35"/>
<rect x="541" y="176" width="1" height="9" fill="#f2ec50"/>
<rect x="539" y="180" width="5" height="2" fill="#00f050"/>
<rect x="548" y="180" width="1" height="6" fill="#f2ec50"/>
<rect x="546" y="183" width="5" height="2" fill="#ff1f35"/>
<rect x="555" y="182" width="1" height="8" fill="#f2ec50"/>
<rect x="553" y="184" width="5" height="6" fill="#00f050"/>
<rect x="562" y="182" width="1" height="9" fill="#f2ec50"/>
<rect x="560" y="184" width="5" height="3" fill="#00f050"/>
<rect x="569" y="183" width="1" height="8" fill="#f2ec50"/>
<rect x="567" y="183" width="5" height="2" fill="#ff1f35"/>
<rect x="576" y="179" width="1" height="9" fill="#f2ec50"/>
<rect x="574" y="184" width="5" height="4" fill="#00f050"/>
<rect x="583" y="169" width="1" height="29" fill="#f2ec50"/>
<rect x="581" y="180" width="5" height="4" fill="#00f050"/>
<rect x="590" y="176" width="1" height="15" fill="#f2ec50"/>
<rect x="588" y="180" width="5" height="8" fill="#ff1f35"/>
<rect x="597" y="183" width="1" height="6" fill="#f2ec50"/>
<rect x="595" y="186" width="5" height="2" fill="#00f050"/>
<rect x="604" y="186" width="1" height="11" fill="#f2ec50"/>
<rect x="602" y="186" width="5" height="6" fill="#ff1f35"/>
<rect x="611" y="183" width="1" height="12" fill="#f2ec50"/>
<rect x="609" y="190" width="5" height="2" fill="#00f050"/>
<rect x="618" y="186" width="1" height="27" fill="#f2ec50"/>
<rect x="616" y="186" width="5" height="22" fill="#ff1f35"/>
<rect x="625" y="205" width="1" height="8" fill="#f2ec50"/>
<rect x="623" y="207" width="5" height="1" fill="#f2ec50"/>
<rect x="632" y="206" width="1" height="13" fill="#f2ec50"/>
<rect x="630" y="209" width="5" height="6" fill="#ff1f35"/>
<rect x="639" y="211" width="1" height="10" fill="#f2ec50"/>
<rect x="637" y="214" width="5" height="2" fill="#00f050"/>
<rect x="646" y="214" width="1" height="16" fill="#f2ec50"/>
<rect x="644" y="214" width="5" height="16" fill="#ff1f35"/>
<rect x="653" y="219" width="1" height="14" fill="#f2ec50"/>
<rect x="651" y="227" width="5" height="4" fill="#ff1f35"/>
<rect x="660" y="212" width="1" height="19" fill="#f2ec50"/>
<rect x="658" y="224" width="5" height="7" fill="#00f050"/>
<rect x="667" y="222" width="1" height="7" fill="#f2ec50"/>
<rect x="665" y="225" width="5" height="3" fill="#00f050"/>
<rect x="674" y="220" width="1" height="13" fill="#f2ec50"/>
<rect x="672" y="224" width="5" height="7" fill="#ff1f35"/>
<rect x="681" y="227" width="1" height="13" fill="#f2ec50"/>
<rect x="679" y="230" width="5" height="8" fill="#ff1f35"/>
<rect x="688" y="229" width="1" height="11" fill="#f2ec50"/>
<rect x="686" y="237" width="5" height="1" fill="#f2ec50"/>
<rect x="695" y="234" width="1" height="31" fill="#f2ec50"/>
<rect x="693" y="237" width="5" height="23" fill="#ff1f35"/>
<rect x="702" y="265" width="1" height="46" fill="#f2ec50"/>
<rect x="700" y="267" width="5" height="37" fill="#ff1f35"/>
<rect x="709" y="299" width="1" height="16" fill="#f2ec50"/>
<rect x="707" y="301" width="5" height="14" fill="#ff1f35"/>
<rect x="716" y="306" width="1" height="21" fill="#f2ec50"/>
<rect x="714" y="314" width="5" height="1" fill="#f2ec50"/>
<rect x="723" y="288" width="1" height="34" fill="#f2ec50"/>
<rect x="721" y="308" width="5" height="12" fill="#00f050"/>
<rect x="730" y="301" width="1" height="12" fill="#f2ec50"/>
<rect x="728" y="306" width="5" height="2" fill="#00f050"/>
<rect x="737" y="301" width="1" height="12" fill="#f2ec50"/>
<rect x="735" y="301" width="5" height="12" fill="#00f050"/>
<rect x="744" y="301" width="1" height="14" fill="#f2ec50"/>
<rect x="742" y="303" width="5" height="7" fill="#ff1f35"/>
<rect x="751" y="303" width="1" height="14" fill="#f2ec50"/>
<rect x="749" y="310" width="5" height="1" fill="#f2ec50"/>
<rect x="758" y="306" width="1" height="9" fill="#f2ec50"/>
<rect x="756" y="308" width="5" height="7" fill="#00f050"/>
<rect x="765" y="306" width="1" height="7" fill="#f2ec50"/>
<rect x="763" y="310" width="5" height="1" fill="#f2ec50"/>
<rect x="772" y="305" width="1" height="8" fill="#f2ec50"/>
<rect x="770" y="306" width="5" height="7" fill="#00f050"/>
<rect x="779" y="296" width="1" height="13" fill="#f2ec50"/>
<rect x="777" y="303" width="5" height="5" fill="#00f050"/>
<rect x="786" y="294" width="1" height="17" fill="#f2ec50"/>
<rect x="784" y="294" width="5" height="8" fill="#ff1f35"/>
<rect x="793" y="300" width="1" height="15" fill="#f2ec50"/>
<rect x="791" y="301" width="5" height="5" fill="#ff1f35"/>
<rect x="800" y="301" width="1" height="9" fill="#f2ec50"/>
<rect x="798" y="303" width="5" height="5" fill="#00f050"/>
<rect x="807" y="290" width="1" height="18" fill="#f2ec50"/>
<rect x="805" y="294" width="5" height="12" fill="#00f050"/>
<rect x="814" y="294" width="1" height="12" fill="#f2ec50"/>
<rect x="812" y="294" width="5" height="8" fill="#ff1f35"/>
<rect x="821" y="299" width="1" height="9" fill="#f2ec50"/>
<rect x="819" y="303" width="5" height="3" fill="#ff1f35"/>
<rect x="828" y="294" width="1" height="14" fill="#f2ec50"/>
<rect x="826" y="303" width="5" height="1" fill="#f2ec50"/>
<rect x="835" y="296" width="1" height="10" fill="#f2ec50"/>
<rect x="833" y="299" width="5" height="5" fill="#00f050"/>
<rect x="842" y="298" width="1" height="6" fill="#f2ec50"/>
<rect x="840" y="298" width="5" height="6" fill="#ff1f35"/>
<rect x="849" y="299" width="1" height="11" fill="#f2ec50"/>
<rect x="847" y="303" width="5" height="5" fill="#ff1f35"/>
<rect x="856" y="301" width="1" height="8" fill="#f2ec50"/>
<rect x="854" y="301" width="5" height="7" fill="#00f050"/>
<rect x="863" y="303" width="1" height="37" fill="#f2ec50"/>
<rect x="861" y="303" width="5" height="7" fill="#ff1f35"/>
<rect x="870" y="308" width="1" height="14" fill="#f2ec50"/>
<rect x="868" y="308" width="5" height="5" fill="#00f050"/>
<rect x="877" y="299" width="1" height="18" fill="#f2ec50"/>
<rect x="875" y="308" width="5" height="1" fill="#f2ec50"/>
<rect x="884" y="301" width="1" height="14" fill="#f2ec50"/>
<rect x="882" y="301" width="5" height="9" fill="#ff1f35"/>
<rect x="891" y="306" width="1" height="21" fill="#f2ec50"/>
<rect x="889" y="312" width="5" height="3" fill="#ff1f35"/>
<rect x="898" y="315" width="1" height="10" fill="#f2ec50"/>
<rect x="896" y="317" width="5" height="5" fill="#ff1f35"/>
<rect x="905" y="308" width="1" height="21" fill="#f2ec50"/>
<rect x="903" y="319" width="5" height="3" fill="#ff1f35"/>
<rect x="912" y="319" width="1" height="11" fill="#f2ec50"/>
<rect x="910" y="326" width="5" height="4" fill="#ff1f35"/>
<rect x="919" y="322" width="1" height="10" fill="#f2ec50"/>
<rect x="917" y="326" width="5" height="4" fill="#00f050"/>
<rect x="926" y="322" width="1" height="19" fill="#f2ec50"/>
<rect x="924" y="326" width="5" height="10" fill="#ff1f35"/>
<rect x="933" y="334" width="1" height="25" fill="#f2ec50"/>
<rect x="931" y="335" width="5" height="18" fill="#ff1f35"/>
<rect x="940" y="349" width="1" height="14" fill="#f2ec50"/>
<rect x="938" y="350" width="5" height="2" fill="#ff1f35"/>
<rect x="947" y="319" width="1" height="38" fill="#f2ec50"/>
<rect x="945" y="351" width="5" height="2" fill="#00f050"/>
<rect x="954" y="343" width="1" height="14" fill="#f2ec50"/>
<rect x="952" y="348" width="5" height="2" fill="#ff1f35"/>
<rect x="961" y="339" width="1" height="15" fill="#f2ec50"/>
<rect x="959" y="340" width="5" height="11" fill="#00f050"/>
<rect x="968" y="332" width="1" height="13" fill="#f2ec50"/>
<rect x="966" y="335" width="5" height="10" fill="#00f050"/>
<rect x="975" y="335" width="1" height="7" fill="#f2ec50"/>
<rect x="973" y="337" width="5" height="2" fill="#00f050"/>
<rect x="982" y="334" width="1" height="7" fill="#f2ec50"/>
<rect x="980" y="337" width="5" height="2" fill="#ff1f35"/>
<rect x="989" y="315" width="1" height="19" fill="#f2ec50"/>
<rect x="987" y="317" width="5" height="10" fill="#ff1f35"/>
<rect x="996" y="327" width="1" height="10" fill="#f2ec50"/>
<rect x="994" y="329" width="5" height="3" fill="#ff1f35"/>
<rect x="1003" y="331" width="1" height="5" fill="#f2ec50"/>
<rect x="1001" y="332" width="5" height="2" fill="#00f050"/>
<rect x="1010" y="332" width="1" height="7" fill="#f2ec50"/>
<rect x="1008" y="334" width="5" height="2" fill="#00f050"/>
<rect x="1017" y="303" width="1" height="38" fill="#f2ec50"/>
<rect x="1015" y="326" width="5" height="10" fill="#00f050"/>
<rect x="1024" y="319" width="1" height="13" fill="#f2ec50"/>
<rect x="1022" y="326" width="5" height="6" fill="#ff1f35"/>
<rect x="1031" y="329" width="1" height="6" fill="#f2ec50"/>
<rect x="1029" y="329" width="5" height="3" fill="#00f050"/>
<rect x="1038" y="324" width="1" height="12" fill="#f2ec50"/>
<rect x="1036" y="329" width="5" height="3" fill="#00f050"/>
<rect x="1045" y="317" width="1" height="18" fill="#f2ec50"/>
<rect x="1043" y="329" width="5" height="6" fill="#ff1f35"/>
<rect x="1052" y="326" width="1" height="13" fill="#f2ec50"/>
<rect x="1050" y="326" width="5" height="13" fill="#00f050"/>
<rect x="1059" y="315" width="1" height="20" fill="#f2ec50"/>
<rect x="1057" y="329" width="5" height="3" fill="#ff1f35"/>
<rect x="1066" y="327" width="1" height="17" fill="#f2ec50"/>
<rect x="1064" y="335" width="5" height="1" fill="#f2ec50"/>
<rect x="1073" y="334" width="1" height="11" fill="#f2ec50"/>
<rect x="1071" y="335" width="5" height="4" fill="#00f050"/>
<rect x="1080" y="319" width="1" height="21" fill="#f2ec50"/>
<rect x="1078" y="329" width="5" height="11" fill="#ff1f35"/>
<rect x="1087" y="334" width="1" height="11" fill="#f2ec50"/>
<rect x="1085" y="338" width="5" height="5" fill="#ff1f35"/>
<rect x="1094" y="337" width="1" height="12" fill="#f2ec50"/>
<rect x="1092" y="342" width="5" height="4" fill="#ff1f35"/>
<rect x="1101" y="336" width="1" height="26" fill="#f2ec50"/>
<rect x="1099" y="347" width="5" height="1" fill="#f2ec50"/>
<rect x="1108" y="341" width="1" height="18" fill="#f2ec50"/>
<rect x="1106" y="347" width="5" height="10" fill="#ff1f35"/>
<rect x="1115" y="355" width="1" height="11" fill="#f2ec50"/>
<rect x="1113" y="355" width="5" height="5" fill="#ff1f35"/>
<rect x="1122" y="345" width="1" height="19" fill="#f2ec50"/>
<rect x="1120" y="357" width="5" height="3" fill="#00f050"/>
<rect x="1129" y="346" width="1" height="37" fill="#f2ec50"/>
<rect x="1127" y="361" width="5" height="22" fill="#ff1f35"/>
<circle cx="9.5" cy="160" r="1.7" fill="#a4a4f2"/>
<circle cx="16.5" cy="162.4" r="1.7" fill="#a4a4f2"/>
<circle cx="23.5" cy="164" r="1.7" fill="#a4a4f2"/>
<circle cx="30.5" cy="165.8" r="1.7" fill="#a4a4f2"/>
<circle cx="37.5" cy="167.5" r="1.7" fill="#a4a4f2"/>
<circle cx="44.5" cy="169" r="1.7" fill="#a4a4f2"/>
<circle cx="51.5" cy="212.4" r="1.7" fill="#a4a4f2"/>
<circle cx="58.5" cy="212" r="1.7" fill="#a4a4f2"/>
<circle cx="65.5" cy="210" r="1.7" fill="#a4a4f2"/>
<circle cx="72.5" cy="206" r="1.7" fill="#a4a4f2"/>
<circle cx="79.5" cy="201" r="1.7" fill="#a4a4f2"/>
<circle cx="86.5" cy="194.2" r="1.7" fill="#a4a4f2"/>
<circle cx="93.5" cy="188.5" r="1.7" fill="#a4a4f2"/>
<circle cx="100.5" cy="141.7" r="1.7" fill="#a4a4f2"/>
<circle cx="107.5" cy="142.2" r="1.7" fill="#a4a4f2"/>
<circle cx="114.5" cy="180.4" r="1.7" fill="#a4a4f2"/>
<circle cx="121.5" cy="180" r="1.7" fill="#a4a4f2"/>
<circle cx="128.5" cy="148.3" r="1.7" fill="#a4a4f2"/>
<circle cx="135.5" cy="148.7" r="1.7" fill="#a4a4f2"/>
<circle cx="142.5" cy="170" r="1.7" fill="#a4a4f2"/>
<circle cx="149.5" cy="169.5" r="1.7" fill="#a4a4f2"/>
<circle cx="156.5" cy="168.5" r="1.7" fill="#a4a4f2"/>
<circle cx="163.5" cy="165.2" r="1.7" fill="#a4a4f2"/>
<circle cx="170.5" cy="160" r="1.7" fill="#a4a4f2"/>
<circle cx="177.5" cy="106" r="1.7" fill="#a4a4f2"/>
<circle cx="184.5" cy="106.2" r="1.7" fill="#a4a4f2"/>
<circle cx="191.5" cy="107.2" r="1.7" fill="#a4a4f2"/>
<circle cx="198.5" cy="108.2" r="1.7" fill="#a4a4f2"/>
<circle cx="205.5" cy="109.3" r="1.7" fill="#a4a4f2"/>
<circle cx="212.5" cy="110.2" r="1.7" fill="#a4a4f2"/>
<circle cx="219.5" cy="111.2" r="1.7" fill="#a4a4f2"/>
<circle cx="226.5" cy="112.1" r="1.7" fill="#a4a4f2"/>
<circle cx="233.5" cy="113" r="1.7" fill="#a4a4f2"/>
<circle cx="240.5" cy="113.9" r="1.7" fill="#a4a4f2"/>
<circle cx="247.5" cy="114.9" r="1.7" fill="#a4a4f2"/>
<circle cx="254.5" cy="115.7" r="1.7" fill="#a4a4f2"/>
<circle cx="261.5" cy="116.8" r="1.7" fill="#a4a4f2"/>
<circle cx="268.5" cy="117.5" r="1.7" fill="#a4a4f2"/>
<circle cx="275.5" cy="118.5" r="1.7" fill="#a4a4f2"/>
<circle cx="282.5" cy="119.4" r="1.7" fill="#a4a4f2"/>
<circle cx="289.5" cy="120.3" r="1.7" fill="#a4a4f2"/>
<circle cx="296.5" cy="120.9" r="1.7" fill="#a4a4f2"/>
<circle cx="303.5" cy="121.9" r="1.7" fill="#a4a4f2"/>
<circle cx="310.5" cy="122.6" r="1.7" fill="#a4a4f2"/>
<circle cx="317.5" cy="123.3" r="1.7" fill="#a4a4f2"/>
<circle cx="324.5" cy="124.1" r="1.7" fill="#a4a4f2"/>
<circle cx="331.5" cy="124.9" r="1.7" fill="#a4a4f2"/>
<circle cx="338.5" cy="125.6" r="1.7" fill="#a4a4f2"/>
<circle cx="345.5" cy="126.3" r="1.7" fill="#a4a4f2"/>
<circle cx="352.5" cy="126.8" r="1.7" fill="#a4a4f2"/>
<circle cx="359.5" cy="127.5" r="1.7" fill="#a4a4f2"/>
<circle cx="366.5" cy="128.2" r="1.7" fill="#a4a4f2"/>
<circle cx="373.5" cy="129.1" r="1.7" fill="#a4a4f2"/>
<circle cx="380.5" cy="130" r="1.7" fill="#a4a4f2"/>
<circle cx="387.5" cy="130.7" r="1.7" fill="#a4a4f2"/>
<circle cx="394.5" cy="131.3" r="1.7" fill="#a4a4f2"/>
<circle cx="401.5" cy="131.8" r="1.7" fill="#a4a4f2"/>
<circle cx="408.5" cy="132.6" r="1.7" fill="#a4a4f2"/>
<circle cx="415.5" cy="133.2" r="1.7" fill="#a4a4f2"/>
<circle cx="422.5" cy="133.7" r="1.7" fill="#a4a4f2"/>
<circle cx="429.5" cy="135.3" r="1.7" fill="#a4a4f2"/>
<circle cx="436.5" cy="137" r="1.7" fill="#a4a4f2"/>
<circle cx="443.5" cy="138.5" r="1.7" fill="#a4a4f2"/>
<circle cx="450.5" cy="140.2" r="1.7" fill="#a4a4f2"/>
<circle cx="457.5" cy="141.6" r="1.7" fill="#a4a4f2"/>
<circle cx="464.5" cy="143.2" r="1.7" fill="#a4a4f2"/>
<circle cx="471.5" cy="144.4" r="1.7" fill="#a4a4f2"/>
<circle cx="478.5" cy="145.9" r="1.7" fill="#a4a4f2"/>
<circle cx="485.5" cy="147.1" r="1.7" fill="#a4a4f2"/>
<circle cx="492.5" cy="148.4" r="1.7" fill="#a4a4f2"/>
<circle cx="499.5" cy="149.5" r="1.7" fill="#a4a4f2"/>
<circle cx="506.5" cy="150.6" r="1.7" fill="#a4a4f2"/>
<circle cx="513.5" cy="152.5" r="1.7" fill="#a4a4f2"/>
<circle cx="520.5" cy="156" r="1.7" fill="#a4a4f2"/>
<circle cx="527.5" cy="159" r="1.7" fill="#a4a4f2"/>
<circle cx="534.5" cy="162" r="1.7" fill="#a4a4f2"/>
<circle cx="541.5" cy="164.6" r="1.7" fill="#a4a4f2"/>
<circle cx="548.5" cy="167.2" r="1.7" fill="#a4a4f2"/>
<circle cx="555.5" cy="169.4" r="1.7" fill="#a4a4f2"/>
<circle cx="562.5" cy="171.3" r="1.7" fill="#a4a4f2"/>
<circle cx="569.5" cy="173.5" r="1.7" fill="#a4a4f2"/>
<circle cx="576.5" cy="175.3" r="1.7" fill="#a4a4f2"/>
<circle cx="583.5" cy="177.1" r="1.7" fill="#a4a4f2"/>
<circle cx="590.5" cy="197.8" r="1.7" fill="#a4a4f2"/>
<circle cx="597.5" cy="197.8" r="1.7" fill="#a4a4f2"/>
<circle cx="604.5" cy="197.6" r="1.7" fill="#a4a4f2"/>
<circle cx="611.5" cy="176" r="1.7" fill="#a4a4f2"/>
<circle cx="618.5" cy="176.5" r="1.7" fill="#a4a4f2"/>
<circle cx="625.5" cy="178.2" r="1.7" fill="#a4a4f2"/>
<circle cx="632.5" cy="179.3" r="1.7" fill="#a4a4f2"/>
<circle cx="639.5" cy="181.4" r="1.7" fill="#a4a4f2"/>
<circle cx="646.5" cy="184.3" r="1.7" fill="#a4a4f2"/>
<circle cx="653.5" cy="188.4" r="1.7" fill="#a4a4f2"/>
<circle cx="660.5" cy="193.6" r="1.7" fill="#a4a4f2"/>
<circle cx="667.5" cy="197.6" r="1.7" fill="#a4a4f2"/>
<circle cx="674.5" cy="201.6" r="1.7" fill="#a4a4f2"/>
<circle cx="681.5" cy="205.3" r="1.7" fill="#a4a4f2"/>
<circle cx="688.5" cy="209.7" r="1.7" fill="#a4a4f2"/>
<circle cx="695.5" cy="213.6" r="1.7" fill="#a4a4f2"/>
<circle cx="702.5" cy="221.4" r="1.7" fill="#a4a4f2"/>
<circle cx="709.5" cy="234.4" r="1.7" fill="#a4a4f2"/>
<circle cx="716.5" cy="248.5" r="1.7" fill="#a4a4f2"/>
<circle cx="723.5" cy="263.7" r="1.7" fill="#a4a4f2"/>
<circle cx="730.5" cy="276.4" r="1.7" fill="#a4a4f2"/>
<circle cx="737.5" cy="287" r="1.7" fill="#a4a4f2"/>
<circle cx="744.5" cy="295.3" r="1.7" fill="#a4a4f2"/>
<circle cx="751.5" cy="301.2" r="1.7" fill="#a4a4f2"/>
<circle cx="758.5" cy="301.2" r="1.7" fill="#a4a4f2"/>
<circle cx="765.5" cy="303.5" r="1.7" fill="#a4a4f2"/>
<circle cx="772.5" cy="305.5" r="1.7" fill="#a4a4f2"/>
<circle cx="779.5" cy="326.8" r="1.7" fill="#a4a4f2"/>
<circle cx="786.5" cy="326.6" r="1.7" fill="#a4a4f2"/>
<circle cx="793.5" cy="325" r="1.7" fill="#a4a4f2"/>
<circle cx="800.5" cy="323.6" r="1.7" fill="#a4a4f2"/>
<circle cx="807.5" cy="322.6" r="1.7" fill="#a4a4f2"/>
<circle cx="814.5" cy="320.4" r="1.7" fill="#a4a4f2"/>
<circle cx="821.5" cy="318.5" r="1.7" fill="#a4a4f2"/>
<circle cx="828.5" cy="316.8" r="1.7" fill="#a4a4f2"/>
<circle cx="835.5" cy="314.9" r="1.7" fill="#a4a4f2"/>
<circle cx="842.5" cy="313.6" r="1.7" fill="#a4a4f2"/>
<circle cx="849.5" cy="312" r="1.7" fill="#a4a4f2"/>
<circle cx="856.5" cy="310.9" r="1.7" fill="#a4a4f2"/>
<circle cx="863.5" cy="310.1" r="1.7" fill="#a4a4f2"/>
<circle cx="870.5" cy="290.2" r="1.7" fill="#a4a4f2"/>
<circle cx="877.5" cy="290.5" r="1.7" fill="#a4a4f2"/>
<circle cx="884.5" cy="291.3" r="1.7" fill="#a4a4f2"/>
<circle cx="891.5" cy="291.9" r="1.7" fill="#a4a4f2"/>
<circle cx="898.5" cy="293.2" r="1.7" fill="#a4a4f2"/>
<circle cx="905.5" cy="294.4" r="1.7" fill="#a4a4f2"/>
<circle cx="912.5" cy="296.3" r="1.7" fill="#a4a4f2"/>
<circle cx="919.5" cy="298.3" r="1.7" fill="#a4a4f2"/>
<circle cx="926.5" cy="300.6" r="1.7" fill="#a4a4f2"/>
<circle cx="933.5" cy="304.5" r="1.7" fill="#a4a4f2"/>
<circle cx="940.5" cy="310.5" r="1.7" fill="#a4a4f2"/>
<circle cx="947.5" cy="317.2" r="1.7" fill="#a4a4f2"/>
<circle cx="954.5" cy="320" r="1.7" fill="#a4a4f2"/>
<circle cx="961.5" cy="319.6" r="1.7" fill="#a4a4f2"/>
<circle cx="968.5" cy="325.2" r="1.7" fill="#a4a4f2"/>
<circle cx="975.5" cy="330.4" r="1.7" fill="#a4a4f2"/>
<circle cx="982.5" cy="332" r="1.7" fill="#a4a4f2"/>
<circle cx="989.5" cy="334.6" r="1.7" fill="#a4a4f2"/>
<circle cx="996.5" cy="363.1" r="1.7" fill="#a4a4f2"/>
<circle cx="1003.5" cy="362.1" r="1.7" fill="#a4a4f2"/>
<circle cx="1010.5" cy="361.4" r="1.7" fill="#a4a4f2"/>
<circle cx="1017.5" cy="360.8" r="1.7" fill="#a4a4f2"/>
<circle cx="1024.5" cy="358.2" r="1.7" fill="#a4a4f2"/>
<circle cx="1031.5" cy="355.7" r="1.7" fill="#a4a4f2"/>
<circle cx="1038.5" cy="353.4" r="1.7" fill="#a4a4f2"/>
<circle cx="1045.5" cy="351.3" r="1.7" fill="#a4a4f2"/>
<circle cx="1052.5" cy="349.2" r="1.7" fill="#a4a4f2"/>
<circle cx="1059.5" cy="347.2" r="1.7" fill="#a4a4f2"/>
<circle cx="1066.5" cy="345.4" r="1.7" fill="#a4a4f2"/>
<circle cx="1073.5" cy="303.5" r="1.7" fill="#a4a4f2"/>
<circle cx="1080.5" cy="304.2" r="1.7" fill="#a4a4f2"/>
<circle cx="1087.5" cy="305" r="1.7" fill="#a4a4f2"/>
<circle cx="1094.5" cy="305.5" r="1.7" fill="#a4a4f2"/>
<circle cx="1101.5" cy="307" r="1.7" fill="#a4a4f2"/>
<circle cx="1108.5" cy="310.1" r="1.7" fill="#a4a4f2"/>
<circle cx="1115.5" cy="312.9" r="1.7" fill="#a4a4f2"/>
<circle cx="1122.5" cy="317.1" r="1.7" fill="#a4a4f2"/>
<circle cx="1129.5" cy="320.7" r="1.7" fill="#a4a4f2"/>
<polyline fill="none" stroke="#e0e0e0" stroke-width="1.2" stroke-linejoin="round" points="10,109 75,115.3 166,120 258,124.1 350,128 445,132.2 563.7,140 600,141.7 645,144.8 694.8,151.6 721.9,157 780.6,166.5 870.9,181 961.2,196.7 1051.5,210.3 1129,223.8"/>
<path fill="none" stroke="#e050e0" stroke-width="1.2" d="M9,528.4 C15.8,528.3 39.0,528.5 50,528 C61.0,527.5 64.5,526.8 75,525.6 C85.5,524.4 100.5,522.3 113,520.8 C125.5,519.2 140.4,517.5 150,516.3 C159.6,515.0 164.2,513.9 170.5,513.3 C176.8,512.7 178.8,512.5 188,512.6 C197.2,512.7 211.3,513.3 226,513.8 C240.7,514.3 263.7,515.2 276,515.8 C288.3,516.4 287.7,517.0 300,517.6 C312.3,518.2 330.8,518.8 350,519.3 C369.2,519.8 398.3,520.0 415,520.8 C431.7,521.5 435.7,522.8 450,523.8 C464.3,524.8 483.8,526.0 500.6,526.6 C517.4,527.2 534.4,527.4 551,527.6 C567.6,527.8 583.5,526.9 600,527.6 C616.5,528.4 634.1,530.8 650,532.1 C665.9,533.4 682.7,533.6 695.3,535.6 C707.9,537.6 714.5,542.0 725.4,543.9 C736.3,545.8 752.1,546.7 760.5,547.2 C768.9,547.8 764.7,548.0 775.6,547.2 C786.5,546.4 808.3,544.3 825.7,542.2 C843.1,540.1 863.5,536.1 880,534.4 C896.5,532.7 913.3,532.4 925,532.1 C936.7,531.8 936.7,532.9 950,532.6 C963.3,532.3 987.4,531.1 1005,530.1 C1022.6,529.1 1041.3,527.3 1055.6,526.4 C1069.9,525.5 1078.4,524.7 1090.7,524.6 C1103.0,524.5 1123.0,525.7 1129.5,525.9"/>
<path fill="none" stroke="#10e040" stroke-width="1.2" d="M9,528.4 C14.2,528.4 31.5,528.8 40,528.2 C48.5,527.6 50.0,526.5 60,525 C70.0,523.5 90.8,520.3 100,519 C109.2,517.7 109.2,517.8 115,517 C120.8,516.2 128.0,515.1 135,514.3 C142.0,513.5 152.2,513.1 157,512 C161.8,510.9 160.9,507.6 164,507.5 C167.1,507.4 169.6,510.4 175.6,511.3 C181.6,512.1 187.4,512.0 200,512.6 C212.6,513.2 238.3,514.2 251,515 C263.7,515.8 267.8,517.0 276,517.6 C284.2,518.2 279.3,518.2 300,518.6 C320.7,519.0 380.8,519.4 400,519.8 C419.2,520.2 411.7,520.3 415,520.8 C418.3,521.3 417.5,522.0 420,522.6 C422.5,523.2 425.0,524.0 430,524.6 C435.0,525.2 442.4,525.7 450,526.1 C457.6,526.5 465.5,526.7 475.6,526.9 C485.7,527.1 504.5,526.9 510.7,527.1 C516.9,527.3 506.3,527.8 513,527.9 C519.7,528.0 536.5,527.9 551,527.9 C565.5,527.9 589.8,527.6 600,527.6 C610.2,527.6 608.3,527.2 612.5,527.6 C616.7,528.0 618.3,528.9 625,530.1 C631.7,531.4 641.4,533.9 652.7,535.1 C664.0,536.4 683.6,536.1 692.8,537.6 C702.0,539.1 702.8,542.0 707.8,543.9 C712.8,545.8 715.9,548.1 723,548.9 C730.1,549.7 742.6,549.3 750.5,548.9 C758.4,548.5 760.1,547.9 770.6,546.4 C781.1,544.9 799.8,541.7 813.2,539.6 C826.6,537.5 839.7,535.3 850.8,533.9 C861.9,532.5 867.6,531.7 880,531.4 C892.4,531.1 913.3,531.8 925,532.1 C936.7,532.4 936.7,533.7 950,533.1 C963.3,532.5 987.4,529.8 1005,528.4 C1022.6,527.0 1041.3,525.2 1055.6,524.6 C1069.9,524.0 1078.4,524.1 1090.7,524.6 C1103.0,525.1 1123.0,527.3 1129.5,527.8"/>
<polyline fill="none" stroke="#e8e040" stroke-width="1.1" stroke-linejoin="round" points="9.5,604.9 15,598.6 30,594 45,590 55,591 62.7,586 67.7,583.6 74,583.6 82.8,587.3 92.8,596.1 100.3,582.3 109,584 115.4,582.3 122,588.6 129,585.6 136.7,581.6 143,584.8 149.7,582.3 156.8,582.8 163.8,574 170.5,590.3 177.6,588.6 184.3,586 191.9,589.1 205.7,588.6 213.2,587.3 220.7,588.6 233.3,587.8 247,587.8 254.6,591.1 262.1,589.1 275.9,590.3 283.4,586.6 291,588.6 297.2,591.1 312.5,590.3 323.8,588.6 331.4,590.6 338.9,588.6 345,588.6 352.7,591.8 360.2,591.1 367.7,589.8 374,589.8 380.3,593.1 387.8,590.3 395.3,591.1 401.6,589.3 409.1,589.3 415.4,591.6 422.4,602.9 429.2,599.9 436.7,599.9 444.2,598.1 456.8,598.6 464.3,599.1 471.8,600.4 478.8,596.6 485.6,597.4 492.6,601.6 499.4,601.6 506.9,596.1 513.2,603.6 520.7,598.6 527.7,597.4 534.5,599.1 541.5,597.9 548.3,600.4 563.3,600.4 577.1,600.4 584.2,595.6 591,600.4 600,599.4 605,601.6 612.5,601.1 618.8,609.1 626.3,609.1 633.9,611.1 640.1,611.1 647.7,614.9 653.9,615.4 661.4,609.1 667.7,609.6 675.2,611.1 682.8,612.9 689,612.9 702.8,620.7 710.4,621.7 716.6,621.7 724.2,618.7 730.4,617.4 737.9,614.4 744.2,615.7 751.7,615.7 759.3,614.2 765.5,614.2 773.1,611.1 780.6,609.9 786.9,608.6 793.1,609.9 800.7,608.1 807.7,602.4 814.5,604.1 822,605.6 828.2,604.1 835.8,601.1 842,602.9 849.6,604.1 856.6,599.4 863.4,603.1 870.9,601.6 877.9,601.6 884.7,602.9 892.2,604.9 900,606.1 907.6,606.6 913.9,609.1 921.4,606.9 927.7,609.1 935.2,613.2 941.5,612.4 949,612.4 955.2,611.1 962.8,603.6 969,600.4 976.6,601.1 982.8,601.6 990.4,593.6 996.6,596.6 1004.2,596.6 1010.4,597.9 1018,592.3 1025,595.6 1031.7,593.6 1038,593.6 1045.5,596.6 1053.1,591.1 1059.3,593.6 1066.9,596.1 1073.1,596.1 1080.7,598.1 1086.9,599.4 1094.4,601.1 1102,602.4 1108.2,605.6 1115.8,607.4 1122,604.9 1129.6,611.9"/>
<path d="M37.9 192.39999999999998 l-4 4.3 h2.7 v5.2 h2.6 v-5.2 h2.7 Z" fill="#00f0f0"/><text x="38.6" y="215.2" font-size="12.2" font-weight="bold" text-anchor="middle" fill="#00f0f0" stroke="#00f0f0" stroke-width="0.2" textLength="7.6" lengthAdjust="spacingAndGlyphs">B</text>
<path d="M583.9 202.2 l-4 4.3 h2.7 v5.2 h2.6 v-5.2 h2.7 Z" fill="#00f0f0"/><text x="584.6" y="225.0" font-size="12.2" font-weight="bold" text-anchor="middle" fill="#00f0f0" stroke="#00f0f0" stroke-width="0.2" textLength="7.6" lengthAdjust="spacingAndGlyphs">B</text>
<path d="M772.9 317.2 l-4 4.3 h2.7 v5.2 h2.6 v-5.2 h2.7 Z" fill="#00f0f0"/><text x="773.6" y="340.0" font-size="12.2" font-weight="bold" text-anchor="middle" fill="#00f0f0" stroke="#00f0f0" stroke-width="0.2" textLength="7.6" lengthAdjust="spacingAndGlyphs">B</text>
<path d="M968.9 349.59999999999997 l-4 4.3 h2.7 v5.2 h2.6 v-5.2 h2.7 Z" fill="#00f0f0"/><text x="969.6" y="372.4" font-size="12.2" font-weight="bold" text-anchor="middle" fill="#00f0f0" stroke="#00f0f0" stroke-width="0.2" textLength="7.6" lengthAdjust="spacingAndGlyphs">B</text>
<text x="198.9" y="126.0" font-size="13.5" font-weight="bold" text-anchor="middle" fill="#f29af0" stroke="#f29af0" stroke-width="0.2" style="font-family:'Liberation Serif',serif">S</text><path d="M198.9 139.3 l-4 -4 h2.8 v-6.9 h2.4 v6.9 h2.8 Z" fill="#f29af0"/>
<text x="604.9" y="167.7" font-size="13.5" font-weight="bold" text-anchor="middle" fill="#f29af0" stroke="#f29af0" stroke-width="0.2" style="font-family:'Liberation Serif',serif">S</text><path d="M604.9 181 l-4 -4 h2.8 v-6.9 h2.4 v6.9 h2.8 Z" fill="#f29af0"/>
<text x="933.9" y="317.3" font-size="13.5" font-weight="bold" text-anchor="middle" fill="#f29af0" stroke="#f29af0" stroke-width="0.2" style="font-family:'Liberation Serif',serif">S</text><path d="M933.9 330.6 l-4 -4 h2.8 v-6.9 h2.4 v6.9 h2.8 Z" fill="#f29af0"/>
<text x="1101.9" y="318.0" font-size="13.5" font-weight="bold" text-anchor="middle" fill="#f29af0" stroke="#f29af0" stroke-width="0.2" style="font-family:'Liberation Serif',serif">S</text><path d="M1101.9 331.3 l-4 -4 h2.8 v-6.9 h2.4 v6.9 h2.8 Z" fill="#f29af0"/>
</svg>
</body></html>
